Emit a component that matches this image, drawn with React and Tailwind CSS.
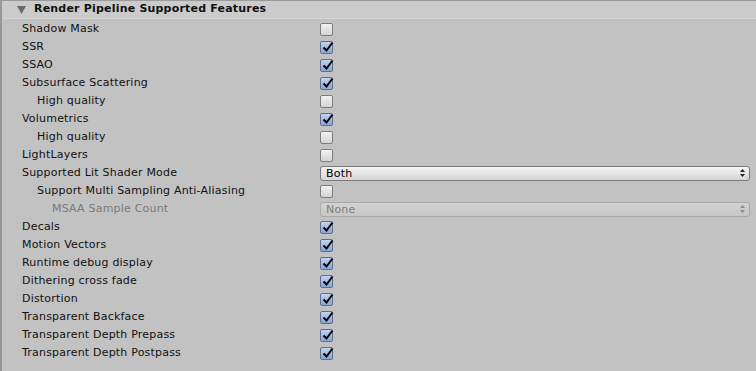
import React from "react";

const rows = [
  { label: "Shadow Mask", type: "check", on: false },
  { label: "SSR", type: "check", on: true },
  { label: "SSAO", type: "check", on: true },
  { label: "Subsurface Scattering", type: "check", on: true },
  { label: "High quality", type: "check", on: false, indent: 1 },
  { label: "Volumetrics", type: "check", on: true },
  { label: "High quality", type: "check", on: false, indent: 1 },
  { label: "LightLayers", type: "check", on: false },
  { label: "Supported Lit Shader Mode", type: "select", value: "Both" },
  { label: "Support Multi Sampling Anti-Aliasing", type: "check", on: false, indent: 1 },
  { label: "MSAA Sample Count", type: "select", value: "None", indent: 2, disabled: true },
  { label: "Decals", type: "check", on: true },
  { label: "Motion Vectors", type: "check", on: true },
  { label: "Runtime debug display", type: "check", on: true },
  { label: "Dithering cross fade", type: "check", on: true },
  { label: "Distortion", type: "check", on: true },
  { label: "Transparent Backface", type: "check", on: true },
  { label: "Transparent Depth Prepass", type: "check", on: true },
  { label: "Transparent Depth Postpass", type: "check", on: true },
];

function Checkbox({ on }) {
  if (on) {
    return (
      <div className="relative w-[13px] h-[13px] rounded-[2px] border border-[#5d6f8c] bg-gradient-to-b from-[#c3d3ee] to-[#8aa6d4]">
        <svg className="absolute left-[1px] top-[-1px]" width="12" height="12" viewBox="0 0 12 12">
          <path d="M1.5 6.5 L4.5 9.5 L10.5 1.5" fill="none" stroke="#000" strokeWidth="2" />
        </svg>
      </div>
    );
  }
  return (
    <div className="w-[13px] h-[13px] rounded-[2px] border border-[#7d7d7d] bg-gradient-to-b from-[#f2f2f2] to-[#d3d3d3]" />
  );
}

function Select({ value, disabled }) {
  return (
    <div
      className={`flex-1 h-[15px] flex items-center justify-between rounded-[3px] border pl-[5px] pr-[4px] ${
        disabled
          ? "border-[#a8a8a8] bg-gradient-to-b from-[#d3d3d3] to-[#c6c6c6] text-[#7e7e7e]"
          : "border-[#7b7b7b] bg-gradient-to-b from-[#f4f4f4] to-[#d6d6d6] text-black"
      }`}
    >
      <span className="leading-none">{value}</span>
      <svg width="5" height="8" viewBox="0 0 5 8">
        <path d="M0 3 L2.5 0 L5 3 Z M0 5 L2.5 8 L5 5 Z" fill={disabled ? "#8a8a8a" : "#222"} />
      </svg>
    </div>
  );
}

export default function App() {
  return (
    <div
      className="w-[756px] h-[371px] bg-[#c2c2c2] border-l-2 border-[#979797] overflow-hidden text-[11px] text-black tracking-[0.2px]"
      style={{ fontFamily: '"DejaVu Sans", sans-serif' }}
    >
      {/* header */}
      <div className="h-[19px] bg-[#cbcbcb] border-t border-[#9a9a9a] border-b border-b-[#d6d6d6] flex items-center pl-[15px]">
        <svg width="9" height="8" viewBox="0 0 9 8" className="mr-[8px]">
          <path d="M0 0 L9 0 L4.5 8 Z" fill="#6a6a6a" />
        </svg>
        <span className="font-bold text-[#111]">Render Pipeline Supported Features</span>
      </div>

      <div className="flex flex-col pt-[1px]">
        {rows.map((r, i) => (
          <div key={i} className="h-[18px] flex items-center pr-[6px]">
            <div
              className={`w-[318px] shrink-0 ${r.disabled ? "text-[#7a7a7a]" : "text-[#111]"} ${
                r.indent === 1 ? "pl-[35px]" : r.indent === 2 ? "pl-[50px]" : "pl-[20px]"
              }`}
            >
              {r.label}
            </div>
            {r.type === "check" ? <Checkbox on={r.on} /> : <Select value={r.value} disabled={r.disabled} />}
          </div>
        ))}
      </div>
    </div>
  );
}
